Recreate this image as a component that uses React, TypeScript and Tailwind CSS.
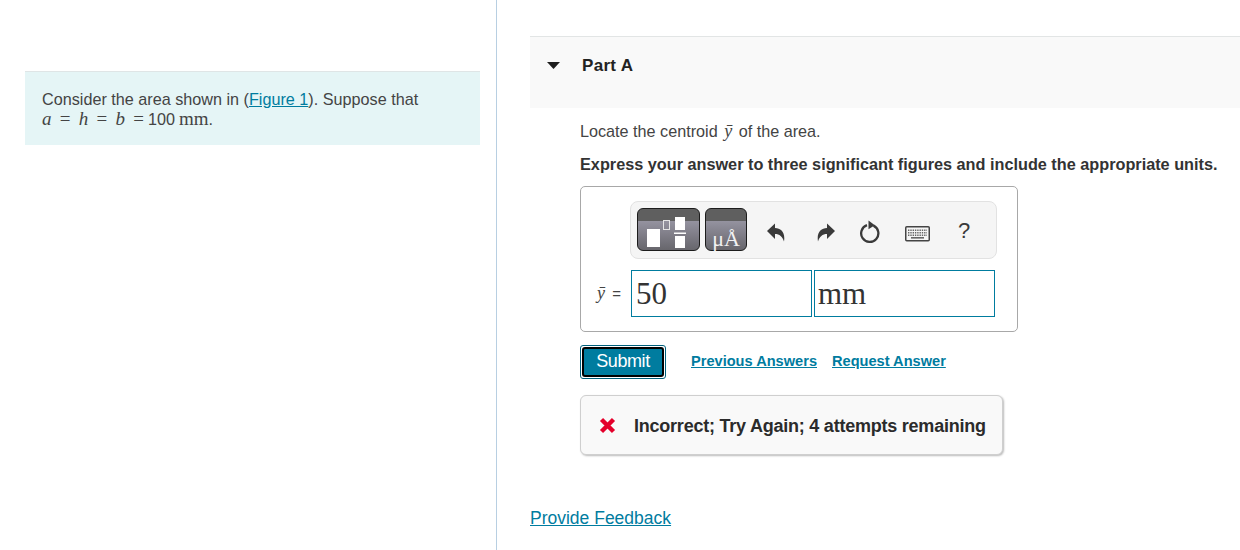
import React from "react";

const sans = "font-['Liberation_Sans',Arial,sans-serif]";
const serif = "font-['Liberation_Serif','Times_New_Roman',serif]";

const btnBg =
  "bg-[linear-gradient(#5f5f5f_0,#5f5f5f_30%,#94929f_30%,#67666c_100%)] border border-[#1c1c1c] rounded-[6px]";

const TemplatesIcon = () => (
  <svg width="61" height="41" viewBox="0 0 61 41">
    <rect x="9" y="20" width="13" height="18" fill="#fff" />
    <rect x="25.5" y="11.5" width="6" height="9" fill="none" stroke="#e4e4e4" />
    <rect x="37" y="8" width="10" height="13" fill="#fff" />
    <rect x="36" y="23.5" width="12" height="1.5" fill="#fff" />
    <rect x="37" y="27" width="10" height="12" fill="#fff" />
  </svg>
);

const UndoIcon = ({ flip }: { flip?: boolean }) => (
  <svg width="18" height="19" viewBox="0 0 18 19" className={flip ? "-scale-x-100" : ""}>
    <path d="M0 8L8 0.5V5C14 5 18.5 9.5 17 18.5C15.5 13.5 12.5 11 8 11V16Z" fill="#3a3a3a" />
  </svg>
);

const ResetIcon = () => (
  <svg width="22" height="24" viewBox="0 0 22 24">
    <path d="M8 5.2 A8.6 8.6 0 1 0 14.5 5.6" fill="none" stroke="#3a3a3a" strokeWidth="2.3" />
    <path d="M9.5 0.6 L15.8 5.3 L9.5 9.2 Z" fill="#3a3a3a" />
  </svg>
);

const KeyboardIcon = () => (
  <svg width="25" height="16" viewBox="0 0 25 16">
    <rect x="0.75" y="0.75" width="23.5" height="14" rx="1" fill="#f5f5f5" stroke="#444" strokeWidth="1.5" />
    <path d="M3 4.2h19M3 6.8h19M3 9.3h19" stroke="#666" strokeWidth="1.4" strokeDasharray="1.4 0.9" />
    <rect x="6" y="11" width="13" height="1.6" fill="#666" />
  </svg>
);

export default function App() {
  return (
    <div className={`${sans} flex h-[550px] w-[1240px] overflow-hidden bg-white text-[16.2px] text-[#444]`}>
      <div className="h-full w-[497px] shrink-0 border-r border-[#b8cfe2] pl-[25px] pr-[16px] pt-[71px]">
        <div className="h-[74px] border-t border-[#dfe5e6] bg-[#e5f5f6] px-[17px] pt-[18px]">
          <div className="h-[20px] leading-[18px]">
            Consider the area shown in (
            <a className="text-[#007c9f] underline">Figure 1</a>
            ). Suppose that
          </div>
          <div className="flex h-[18px] items-center leading-[18px]">
            <span className={`${serif} text-[19px] leading-[18px] [word-spacing:3.5px]`}>
              <i>a</i> = <i>h</i> = <i>b</i> =
            </span>
            <span className="ml-[4px]">100</span>
            <span className={`${serif} ml-[4px] text-[19px] leading-[18px]`}>mm</span>
            <span>.</span>
          </div>
        </div>
      </div>

      <div className="min-w-0 flex-1 pl-[33px] pt-[36px]">
        <div className="flex h-[72px] items-start border-t border-[#e2e5e5] bg-[#f9f9f9] pl-[17px] pt-[19px] text-[#222]">
          <svg width="13" height="7" viewBox="0 0 13 7" className="mt-[6px]">
            <path d="M0 0H13L6.5 7Z" fill="#1e1e1e" />
          </svg>
          <span className="ml-[22px] text-[17px] font-bold leading-[20px] tracking-[0.3px]">Part A</span>
        </div>

        <div className="pl-[50px]">
          <p className="mt-[14px] h-[19px] leading-[19px]">
            Locate the centroid <i className={`${serif} mx-[2px] text-[18px]`}>ȳ</i> of the area.
          </p>
          <p className="mt-[14px] h-[19px] text-[16.25px] font-bold leading-[19px] text-[#333]">
            Express your answer to three significant figures and include the appropriate units.
          </p>

          <div className="mt-[12px] h-[146px] w-[438px] rounded-[5px] border border-[#a8a8a8] pl-[49px] pt-[14px]">
            <div className="flex h-[58px] w-[367px] items-start rounded-[8px] border border-[#e2e2e2] bg-[#f5f5f5] pl-[6px] pt-[6px]">
              <div className={`${btnBg} h-[43px] w-[63px]`}>
                <TemplatesIcon />
              </div>
              <div className={`${btnBg} ml-[5px] flex h-[43px] w-[42px] items-end justify-center`}>
                <span className={`${serif} text-[22px] leading-[22px] text-[#f2f2f2]`}>μÅ</span>
              </div>
              <div className="ml-[20px] mt-[15px]">
                <UndoIcon />
              </div>
              <div className="ml-[32px] mt-[15px]">
                <UndoIcon flip />
              </div>
              <div className="ml-[24px] mt-[12px]">
                <ResetIcon />
              </div>
              <div className="ml-[24px] mt-[18px]">
                <KeyboardIcon />
              </div>
              <span className="ml-[28px] mt-[10px] text-[22px] leading-[26px] text-[#3a3a3a]">?</span>
            </div>

            <div className="-ml-[49px] mt-[11px] flex items-center">
              <div className="w-[50px] pr-[10px] text-right text-[15px] leading-[47px] text-[#444]">
                <i className={`${serif} mr-[3px] text-[18px]`}>ȳ</i> =
              </div>
              <div className={`${serif} h-[47px] w-[181px] border border-[#007c9f] pl-[4px] text-[31px] leading-[45px] text-[#333]`}>
                50
              </div>
              <div className={`${serif} ml-[2px] h-[47px] w-[181px] border border-[#007c9f] pl-[3px] text-[31px] leading-[46px] text-[#333]`}>
                mm
              </div>
            </div>
          </div>

          <div className="mt-[13px] flex items-center">
            <div className="h-[34px] w-[86px] rounded-[3px] border border-[#00607c] bg-white p-[1px]">
              <button className="flex h-full w-full items-center justify-center rounded-[3px] border-[2px] border-black bg-[#007c9f] pb-[1px] text-[18px] tracking-[-0.4px] text-white">
                Submit
              </button>
            </div>
            <a className="ml-[25px] text-[14.6px] font-bold text-[#007c9f] underline">Previous Answers</a>
            <a className="ml-[15px] text-[14.6px] font-bold text-[#007c9f] underline">Request Answer</a>
          </div>

          <div className="mt-[16px] flex h-[60px] w-[423px] items-center rounded-[6px] border border-[#cfcfcf] bg-[#f9f9f9] pl-[18px] shadow-[1px_1px_2px_#bbb]">
            <svg width="17" height="17" viewBox="0 0 17 17">
              <path d="M2.5 2.5L14.5 14.5M14.5 2.5L2.5 14.5" stroke="#e4002b" strokeWidth="4.4" />
            </svg>
            <span className="ml-[18px] pt-[2px] text-[18px] font-bold tracking-[-0.23px] text-[#2b2b2b]">
              Incorrect; Try Again; 4 attempts remaining
            </span>
          </div>
        </div>

        <a className="mt-[53px] block text-[17.5px] leading-[21px] text-[#007c9f] underline">Provide Feedback</a>
      </div>
    </div>
  );
}
